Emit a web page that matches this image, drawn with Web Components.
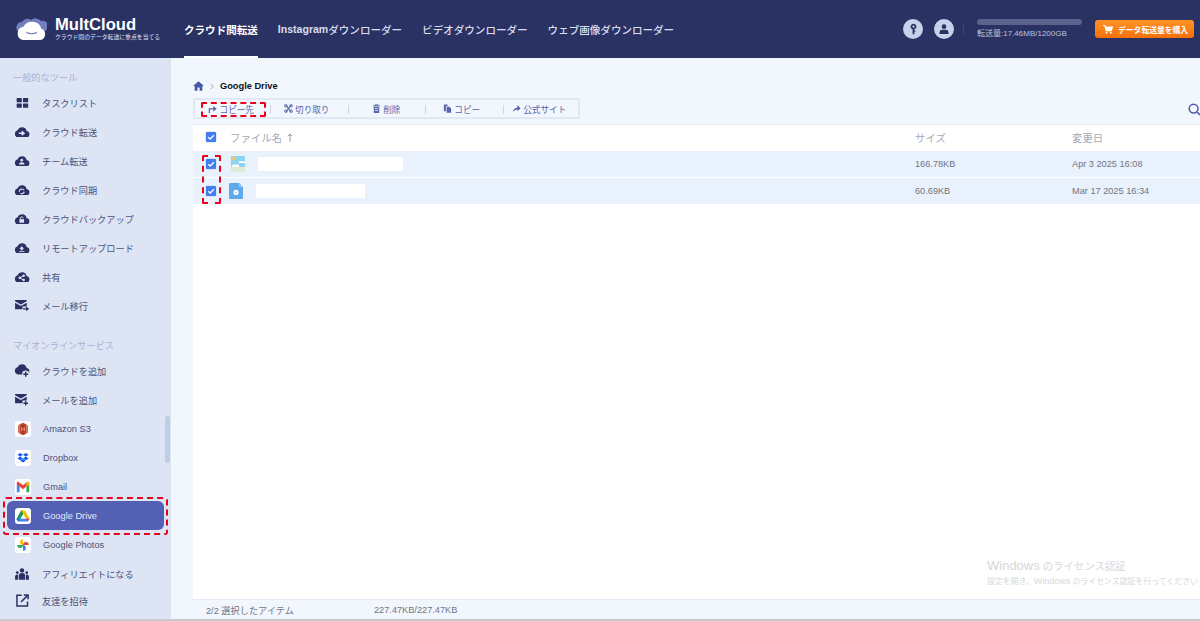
<!DOCTYPE html>
<html lang="ja">
<head>
<meta charset="utf-8">
<title>MultCloud</title>
<style>
html,body{margin:0;height:100%;overflow:hidden}
body{font-family:"Liberation Sans","Noto Sans CJK JP",sans-serif;background:#f2f7fe}
</style>
</head>
<body>
<mc-app></mc-app>
<script>
const cloud='M4 12H12.4A3.5 3.5 0 0 0 13 5.05A5 5 0 0 0 3.6 4.3A4 4 0 0 0 4 12Z';
const navy='#2a3163';
const c=(inner)=>`<svg viewBox="0 0 16 12" width="15.5" height="11.6"><path d="${cloud}" fill="${navy}"/>${inner}</svg>`;
const W='#dde5f5';
const petal='M8 8A2.9 2.9 0 0 1 8 2.2Z';
const ICONS={
 tasks:`<svg viewBox="0 0 14 12" width="13" height="10"><g fill="${navy}"><rect width="6.2" height="5" rx=".6"/><rect x="7.6" width="6.2" height="5" rx=".6"/><rect y="6.6" width="6.2" height="5" rx=".6"/><rect x="7.6" y="6.6" width="6.2" height="5" rx=".6"/></g></svg>`,
 transfer:c(`<path d="M5 7.5H9.3M8 5.6L10.4 7.5L8 9.4" stroke="${W}" stroke-width="1.5" fill="none"/>`),
 team:c(`<circle cx="8" cy="5.4" r="1.4" fill="${W}"/><path d="M5.2 9.8a2.8 2.2 0 0 1 5.6 0Z" fill="${W}"/>`),
 sync:c(`<path d="M5.4 8A2.7 2.7 0 0 1 10.4 6.5M10.6 8A2.7 2.7 0 0 1 6.6 9.6" stroke="${W}" stroke-width="1.2" fill="none"/>`),
 backup:c(`<rect x="5.6" y="6.4" width="4.8" height="3.6" fill="${W}"/><path d="M6.6 6.4V5.4a1.4 1.4 0 0 1 2.8 0" stroke="${W}" fill="none"/>`),
 remote:c(`<path d="M8 4.4L10.4 7H9V8.6H7V7H5.6ZM5.2 9.2H10.8V10.2H5.2Z" fill="${W}"/>`),
 share:c(`<g fill="${W}"><circle cx="10" cy="4.8" r="1.3"/><circle cx="10" cy="9.4" r="1.3"/><circle cx="6" cy="7.1" r="1.3"/></g><path d="M10 4.8L6 7.1L10 9.4" stroke="${W}" fill="none"/>`),
 mail:`<svg viewBox="0 0 15 13" width="14" height="12"><path d="M0 0H12.6V1.4L6.3 5L0 1.4Z" fill="${navy}"/><path d="M0 3L6.3 6.6L12.6 3V7H8V10H0Z" fill="${navy}"/><path d="M8.6 9.6H13.6M12 7.8L14.2 9.6L12 11.4" stroke="${navy}" stroke-width="1.3" fill="none"/></svg>`,
 addcloud:`<svg viewBox="0 0 16 14" width="15.5" height="13.5"><path d="${cloud}" fill="${navy}" transform="translate(0 -1)"/><circle cx="12" cy="10.4" r="3.6" fill="${W}"/><path d="M9.6 10.6H14.6M12.1 8.1V13.1" stroke="${navy}" stroke-width="1.5"/></svg>`,
 addmail:`<svg viewBox="0 0 15 13" width="14" height="12"><path d="M0 0H12.6V1.4L6.3 5L0 1.4Z" fill="${navy}"/><path d="M0 3L6.3 6.6L12.6 3V7H8V10H0Z" fill="${navy}"/><path d="M9 10H14M11.5 7.5V12.5" stroke="${navy}" stroke-width="1.4"/></svg>`,
 s3:`<svg viewBox="0 0 16 16" width="16" height="16"><rect width="16" height="16" rx="3" fill="#fff"/><path d="M8 1.8L11.6 3.4V12.6L8 14.2L4.4 12.6V3.4Z" fill="#b8452b"/><path d="M3 4.6L4.4 4V12L3 11.4ZM13 4.6L11.6 4V12L13 11.4Z" fill="#d4654a"/><path d="M6 6.4H10V9.8H6Z" fill="#e58a70"/><path d="M8 4V12" stroke="#7f2c18" stroke-width=".8"/></svg>`,
 dropbox:`<svg viewBox="0 0 16 16" width="16" height="16"><rect width="16" height="16" rx="3" fill="#fff"/><path d="M5.2 3L8 4.8L5.2 6.6L2.4 4.8ZM10.8 3L13.6 4.8L10.8 6.6L8 4.8ZM5.2 6.6L8 8.4L5.2 10.2L2.4 8.4ZM10.8 6.6L13.6 8.4L10.8 10.2L8 8.4ZM5.2 10.8L8 9.1L10.8 10.8L8 12.6Z" fill="#0f5cf5"/></svg>`,
 gmail:`<svg viewBox="0 0 16 16" width="16" height="16"><rect width="16" height="16" rx="3" fill="#fff"/><path d="M1.8 4.4V13.2H4.6V6.6Z" fill="#4285f4"/><path d="M14.2 4.4V13.2H11.4V6.6Z" fill="#34a853"/><path d="M1.8 4.4C1.8 3 3.2 2.4 4.2 3.2L8 6.2L11.8 3.2C12.8 2.4 14.2 3 14.2 4.4V5.4L11.4 7.6L8 10.2L4.6 7.6L1.8 5.4Z" fill="#ea4335"/><path d="M11.4 5L11.8 3.2C12.8 2.4 14.2 3 14.2 4.4V5.4L11.4 7.6Z" fill="#fbbc04"/></svg>`,
 drive:`<svg viewBox="0 0 16 16" width="16" height="16"><rect width="16" height="16" rx="3" fill="#fff"/><path d="M6 2.6H8L8 6.2L5 11.2H1.4Z" fill="#0f9d58"/><path d="M6 2.6H10L14.6 10.8H11L8 5.6Z" fill="#fbbc04"/><path d="M1.4 10.8H5.4H14.6L12.6 13.6H3.2Z" fill="#4285f4"/><path d="M1.4 10.8H5L3.2 13.6Z" fill="#0f7ad8"/><path d="M11 10.8H14.6L12.6 13.6Z" fill="#ea4335"/></svg>`,
 photos:`<svg viewBox="0 0 16 16" width="16" height="16"><rect width="16" height="16" rx="3" fill="#fff"/><path d="${petal}" fill="#fbbc04"/><path d="${petal}" fill="#ea4335" transform="rotate(90 8 8)"/><path d="${petal}" fill="#4285f4" transform="rotate(180 8 8)"/><path d="${petal}" fill="#34a853" transform="rotate(270 8 8)"/></svg>`,
 people:`<svg viewBox="0 0 15 13" width="14" height="12"><g fill="${navy}"><circle cx="7.5" cy="2.6" r="2.4"/><path d="M4 12.6V8.4A3.5 3 0 0 1 11 8.4V12.6Z"/><circle cx="2.4" cy="5" r="1.5"/><path d="M0 12.6V9A2.4 2.4 0 0 1 3.2 7.4V12.6Z"/><circle cx="12.6" cy="5" r="1.5"/><path d="M15 12.6V9A2.4 2.4 0 0 0 11.8 7.4V12.6Z"/></g></svg>`,
 invite:`<svg viewBox="0 0 14 14" width="13" height="13"><path d="M6 1.4H1V13H12.4V8" stroke="${navy}" stroke-width="1.6" fill="none"/><path d="M5.4 8.6L12 2M8.4 1H13V5.6" stroke="${navy}" stroke-width="1.6" fill="none"/></svg>`
};

function def(name,css,html,extra={}){
  const t=document.createElement('template');
  t.innerHTML=`<style>${css}</style>${html}`;
  customElements.define(name,class extends HTMLElement{
    constructor(){super();this.attachShadow({mode:'open'}).appendChild(t.content.cloneNode(true));}
    connectedCallback(){extra.init&&extra.init.call(this,this.shadowRoot);}
  });
}

def('mc-mark',`:host{position:absolute;box-sizing:border-box;border:2px dashed #e8001c;border-radius:2px;pointer-events:none;z-index:5}`,``,{
  init(){const a=this;a.style.cssText=`left:${a.getAttribute('x')}px;top:${a.getAttribute('y')}px;width:${a.getAttribute('w')}px;height:${a.getAttribute('h')}px;${a.getAttribute('r')?`border-radius:${a.getAttribute('r')}px`:''}`;}
});

def('mc-logo',`:host{display:flex;align-items:center;gap:8px;margin-left:16px;width:155px;color:#fff}
 .t{display:flex;flex-direction:column}
 b{font-size:16.6px;line-height:17px;margin-top:-2px}
 span{font-size:5.85px;line-height:8px;color:#dfe6f7;white-space:nowrap}`,
 `<svg viewBox="0 0 31 24" width="31" height="24"><path d="M3 15A5.4 5.4 0 0 1 6 5A6 6 0 0 1 15 3A7 7 0 0 1 25 4A5.4 5.4 0 0 1 29 14L26 17H4Z" fill="#7280bf"/><path d="M7 23H23.6A5.8 5.8 0 0 0 25.4 11.8A9.8 9.8 0 0 0 7.4 9.8A6.7 6.7 0 0 0 7 23Z" fill="#fff"/><path d="M10.4 15.6Q15.6 18 21 15.6" stroke="#6f78a8" stroke-width="1.1" fill="none"/></svg>
 <div class="t"><b>MultCloud</b><span>クラウド間のデータ転送に重点を当てる</span></div>`);

def('mc-topnav',`:host{display:flex;align-self:stretch;gap:20px;margin-left:13px;font-size:10.55px;color:#d9deee;font-weight:500}
 a{display:flex;align-items:center;white-space:nowrap;box-sizing:border-box;border-bottom:2px solid transparent;padding-top:2px}
 a.on{color:#fff;font-weight:700;border-bottom-color:#fff}
 i{font-style:normal;font-weight:700}`,
 `<a class="on">クラウド間転送</a><a><i>Instagram</i>ダウンローダー</a><a>ビデオダウンローダー</a><a>ウェブ画像ダウンローダー</a>`);

def('mc-usage',`:host{display:flex;align-items:center;margin-left:auto;color:#bcc4dc;font-size:8px}
 .c{width:20px;height:20px;border-radius:50%;background:#c7d2ea;display:flex;align-items:center;justify-content:center}
 .sep{width:1px;height:10px;background:#3c4474;margin:0 13px 0 9px}
 .bar{width:105px;height:6px;border-radius:3px;background:#5b628e;margin-bottom:3px}
 .info{width:118px;white-space:nowrap;line-height:11px;margin-top:-1px}
 .buy{width:99px;height:18px;border-radius:3px;background:linear-gradient(#ff9426,#f36f0a);color:#fff;font-weight:700;font-size:7.8px;display:flex;align-items:center;gap:5px;box-sizing:border-box;padding-left:8px;white-space:nowrap;margin-right:6px}`,
 `<div class="c" style="margin-right:11px"><svg viewBox="0 0 12 14" width="9" height="12"><path fill-rule="evenodd" d="M6 0A4 4 0 0 1 7.2 7.8V9.4H8.6V10.8H7.2V14H4.8V7.8A4 4 0 0 1 6 0ZM6 2.2A1.5 1.5 0 1 0 6 5.2A1.5 1.5 0 0 0 6 2.2Z" fill="${navy}"/></svg></div>
 <div class="c"><svg viewBox="0 0 12 12" width="10" height="10"><circle cx="6" cy="3.2" r="2.8" fill="${navy}"/><path d="M.6 12V9.6A3.4 3 0 0 1 4 7H8A3.4 3 0 0 1 11.4 9.6V12Z" fill="${navy}"/></svg></div>
 <div class="sep"></div>
 <div class="info"><div class="bar"></div>転送量:17.46MB/1200GB</div>
 <div class="buy"><svg viewBox="0 0 12 11" width="10" height="9"><path d="M0 .7H2.2L3.6 7H10L11.4 2.4H2.8" stroke="#fff" stroke-width="1.3" fill="#fff"/><circle cx="4.2" cy="9.6" r="1.2" fill="#fff"/><circle cx="9.4" cy="9.6" r="1.2" fill="#fff"/></svg>データ転送量を購入</div>`);

def('mc-header',`:host{display:flex;align-items:center;height:58px;flex:none;background:${navy};box-sizing:border-box}`,
 `<mc-logo></mc-logo><mc-topnav></mc-topnav><mc-usage></mc-usage>`);

def('mc-nav-item',`:host{display:flex;align-items:center;height:29px;margin:0 7px;padding-left:7px;border-radius:6px;font-size:9.2px;color:#4c5279;white-space:nowrap;flex:none}
 :host([active]){background:#5360b3;color:#e6eafa}
 :host([brand]){font-size:9.25px;padding-left:8px}
 .i{width:16px;margin-right:12px;display:flex;justify-content:center;align-items:center}
 svg{display:block}`,
 `<span class="i"></span><slot></slot>`,{init(r){r.querySelector('.i').innerHTML=ICONS[this.getAttribute('icon')]||'';}});

def('mc-sidebar',`:host{display:flex;flex-direction:column;width:171px;flex:none;background:#dde5f5;padding-top:10px;box-sizing:border-box;position:relative}
 h4{margin:0 0 0 13px;height:20px;line-height:20px;font-size:9.2px;font-weight:400;color:#a7b0d4;flex:none}
 .thumb{position:absolute;left:165px;top:358px;width:5px;height:47px;border-radius:3px;background:#c0cde5}`,
 `<h4>一般的なツール</h4>
 <mc-nav-item icon="tasks">タスクリスト</mc-nav-item>
 <mc-nav-item icon="transfer">クラウド転送</mc-nav-item>
 <mc-nav-item icon="team">チーム転送</mc-nav-item>
 <mc-nav-item icon="sync">クラウド同期</mc-nav-item>
 <mc-nav-item icon="backup">クラウドバックアップ</mc-nav-item>
 <mc-nav-item icon="remote">リモートアップロード</mc-nav-item>
 <mc-nav-item icon="share">共有</mc-nav-item>
 <mc-nav-item icon="mail">メール移行</mc-nav-item>
 <h4 style="margin-top:16px">マイオンラインサービス</h4>
 <mc-nav-item icon="addcloud">クラウドを追加</mc-nav-item>
 <mc-nav-item icon="addmail">メールを追加</mc-nav-item>
 <mc-nav-item icon="s3" brand>Amazon S3</mc-nav-item>
 <mc-nav-item icon="dropbox" brand>Dropbox</mc-nav-item>
 <mc-nav-item icon="gmail" brand>Gmail</mc-nav-item>
 <mc-nav-item icon="drive" brand active>Google Drive</mc-nav-item>
 <mc-nav-item icon="photos" brand>Google Photos</mc-nav-item>
 <mc-nav-item icon="people">アフィリエイトになる</mc-nav-item>
 <mc-nav-item icon="invite" style="height:25px">友達を招待</mc-nav-item>
 <div class="thumb"></div>`);

def('mc-check',`:host{display:block;width:10px;height:10px;background:#3f7df0;border-radius:1px;box-shadow:0 0 0 .5px #c5d6f5}
 svg{display:block}`,`<svg viewBox="0 0 10 10" width="10" height="10"><path d="M2.2 5.2L4.2 7L7.9 3.2" stroke="#fff" stroke-width="1.3" fill="none"/></svg>`);

def('mc-tool',`:host{display:flex;align-items:center;justify-content:center;gap:2.5px;font-size:8.6px;color:#5a64a8;white-space:nowrap;position:relative;height:100%;box-sizing:border-box}
 :host(:not(:last-child))::after{content:"";position:absolute;right:0;top:5px;height:9px;width:1px;background:#ccd5e8}
 svg{display:block}`,`<slot name="i"></slot><slot></slot>`);

def('mc-toolbar',`:host{display:grid;grid-template-columns:76px 77.5px 77px 78px 74.5px;height:21px;box-sizing:border-box;border:2px solid #e1e8f4;border-radius:2px;flex:none}`,
 `<mc-tool style="padding-right:4px"><svg slot="i" viewBox="0 0 10 10" width="9" height="9"><path d="M1.5 10V5.4H7" stroke="#5a64a8" stroke-width="1.4" fill="none"/><path d="M6 2.2L9.6 5.4L6 8.6Z" fill="#5a64a8"/></svg>コピー先</mc-tool>
 <mc-tool style="padding-right:6.5px"><svg slot="i" viewBox="0 0 10 10" width="9" height="9"><path d="M2 1L8 9M8 1L2 9" stroke="#5a64a8" stroke-width="1.2"/><circle cx="2" cy="8" r="1.4" fill="none" stroke="#5a64a8"/><circle cx="8" cy="8" r="1.4" fill="none" stroke="#5a64a8"/><circle cx="2" cy="2" r="1.4" fill="none" stroke="#5a64a8"/><circle cx="8" cy="2" r="1.4" fill="none" stroke="#5a64a8"/></svg>切り取り</mc-tool>
 <mc-tool style="padding-right:2px"><svg slot="i" viewBox="0 0 10 10" width="9" height="9"><path d="M1.2 2H8.8M3.6 2V.8H6.4V2" stroke="#5a64a8" fill="none"/><path fill-rule="evenodd" d="M2 3H8V10H2Z M3.2 4.4V5.2H6.8V4.4Z M3.2 6.6V7.4H6.8V6.6Z" fill="#5a64a8"/></svg>削除</mc-tool>
 <mc-tool style="padding-right:6px"><svg slot="i" viewBox="0 0 10 10" width="9" height="9"><path d="M1 .6H5V2.4H3.2V8H1Z" fill="#5a64a8"/><path d="M4 3H7L9 5V9.6H4Z" fill="#5a64a8"/></svg>コピー</mc-tool>
 <mc-tool style="padding-right:3.5px"><svg slot="i" viewBox="0 0 10 10" width="9" height="9"><path d="M.8 9.2C1.4 5.6 3.4 4 6 3.8V1.2L9.6 4.8L6 8V6C3.8 6 2.2 7 .8 9.2Z" fill="#5a64a8"/></svg>公式サイト</mc-tool>`);

def('mc-crumb',`:host{display:flex;align-items:center;height:12px;font-size:9.25px;font-weight:700;color:#111}
 svg{display:block}`,
 `<svg viewBox="0 0 12 11" width="11" height="10"><path d="M6 .4L12 5.6H10.2V10.6H7.2V7.2H4.8V10.6H1.8V5.6H0Z" fill="#4558a8"/></svg>
 <svg viewBox="0 0 5 8" width="4" height="7" style="margin:0 6px 0 6px"><path d="M1 1L4 4L1 7" stroke="#8890a8" fill="none"/></svg><span>Google Drive</span>`);

const cols='grid-template-columns:37px 685px 157px 1fr;';
def('mc-row',`:host{display:grid;${cols}height:26px;align-items:center;background:#e9f1fd;font-size:9.2px;color:#70757f;margin-bottom:1px}
 .first{display:flex;padding-left:13px}
 .n{display:flex;align-items:center;gap:var(--g,13px);margin-left:var(--ml,0)}
 .mask{height:14px;background:#fff;display:block}`,
 `<div class="first"><mc-check></mc-check></div><div class="n"><slot name="ic"></slot><span class="mask"></span></div><div class="s"></div><div class="d"></div>`,
 {init(r){r.querySelector('.mask').style.width=this.getAttribute('mask')+'px';r.querySelector('.s').textContent=this.getAttribute('size');r.querySelector('.d').textContent=this.getAttribute('date');}});

def('mc-files',`:host{display:flex;flex-direction:column;flex:1;min-width:0;box-sizing:border-box;padding:22px 0 0 22px;overflow:hidden;background:#f2f7fe;position:relative}
 .bar{display:flex;align-items:center;margin-top:6px;height:21px;flex:none}
 .search{margin-left:auto;display:block;margin-top:1px;margin-right:-1px}
 .panel{flex:1;background:#fff;margin-top:5px;border-top:1px solid #e4ecf8;border-bottom:1px solid #e4ecf8;display:flex;flex-direction:column;min-height:0}
 .head{display:grid;${cols}height:26px;align-items:center;font-size:10.4px;color:#a4a8b3;flex:none;padding-bottom:2px;box-sizing:border-box}
 .first{display:flex;padding-left:13px}
 .fn{display:flex;align-items:center;gap:5px}
 .foot{height:19px;flex:none;display:flex;align-items:center;font-size:9.2px;color:#70757f;padding-left:13px}
 .foot span:first-child{width:168px}
 .wm{position:absolute;left:816px;top:499px;color:#d5d7db;white-space:nowrap;z-index:1}
 .wm div:first-child{font-size:10.4px;line-height:17px}
 .wm div:first-child b{font-size:13px;font-weight:400}
 .wm div:last-child{font-size:7.9px;line-height:13px}
 .wm div:last-child b{font-size:9px;font-weight:400}`,
 `<mc-crumb></mc-crumb>
 <div class="bar"><mc-toolbar></mc-toolbar><svg class="search" viewBox="0 0 13 13" width="13" height="13"><circle cx="5.6" cy="5.6" r="4.4" stroke="#4e5ba8" stroke-width="1.5" fill="none"/><path d="M9 9L12 12" stroke="#4e5ba8" stroke-width="1.6"/></svg></div>
 <div class="panel">
  <div class="head"><div class="first"><mc-check></mc-check></div><div class="fn">ファイル名<svg viewBox="0 0 7 10" width="6" height="9"><path d="M3.5 10V1M1 3.4L3.5 1L6 3.4" stroke="#8f939e" fill="none" stroke-width="1.1"/></svg></div><div>サイズ</div><div>変更日</div></div>
  <mc-row mask="145" size="166.78KB" date="Apr 3 2025 16:08"><svg slot="ic" viewBox="0 0 14 16" width="14" height="16" style="margin-left:1px"><rect width="14" height="16" fill="#8fd3f4"/><rect y="11" width="14" height="5" fill="#d9eed4"/><circle cx="3" cy="2.6" r="1.8" fill="#ffd23f"/><path d="M1 11A1.8 1.8 0 0 1 3 8.6H6.6A1.8 1.8 0 0 1 8 11Z" fill="#fff"/><path d="M7.6 7A1.5 1.5 0 0 1 9.4 5.2H12.4A1.5 1.5 0 0 1 14 7Z" fill="#fff"/></svg></mc-row>
  <mc-row mask="109" size="60.69KB" date="Mar 17 2025 16:34" style="--ml:-1px"><svg slot="ic" viewBox="0 0 14 16" width="14" height="16"><path d="M0 1.2A1.2 1.2 0 0 1 1.2 0H10L14 4V14.8A1.2 1.2 0 0 1 12.8 16H1.2A1.2 1.2 0 0 1 0 14.8Z" fill="#5fa9ea"/><path d="M10 0V4H14Z" fill="#9ccaf2"/><circle cx="7" cy="9.4" r="2.6" fill="#fff"/><circle cx="7" cy="9.4" r="1" fill="#a8d0f4"/></svg></mc-row>
  <div style="flex:1"></div>
 </div>
 <div class="foot"><span>2/2 選択したアイテム</span><span>227.47KB/227.47KB</span></div>
 <div class="wm"><div><b>Windows</b> のライセンス認証</div><div>設定を開き、<b>Windows</b> のライセンス認証を行ってください</div></div>`);

def('mc-app',`:host{display:flex;flex-direction:column;height:621px;width:1200px;box-sizing:border-box;border-bottom:2px solid #c9c9c9;position:relative;overflow:hidden}
 .body{display:flex;flex:1;min-height:0}`,
 `<mc-header></mc-header><div class="body"><mc-sidebar></mc-sidebar><mc-files></mc-files></div>
 <mc-mark x="3" y="497" w="165" h="38" r="3"></mc-mark>
 <mc-mark x="201" y="102" w="65" h="15"></mc-mark>
 <mc-mark x="202" y="155" w="19" h="49"></mc-mark>`);
</script>
</body>
</html>
